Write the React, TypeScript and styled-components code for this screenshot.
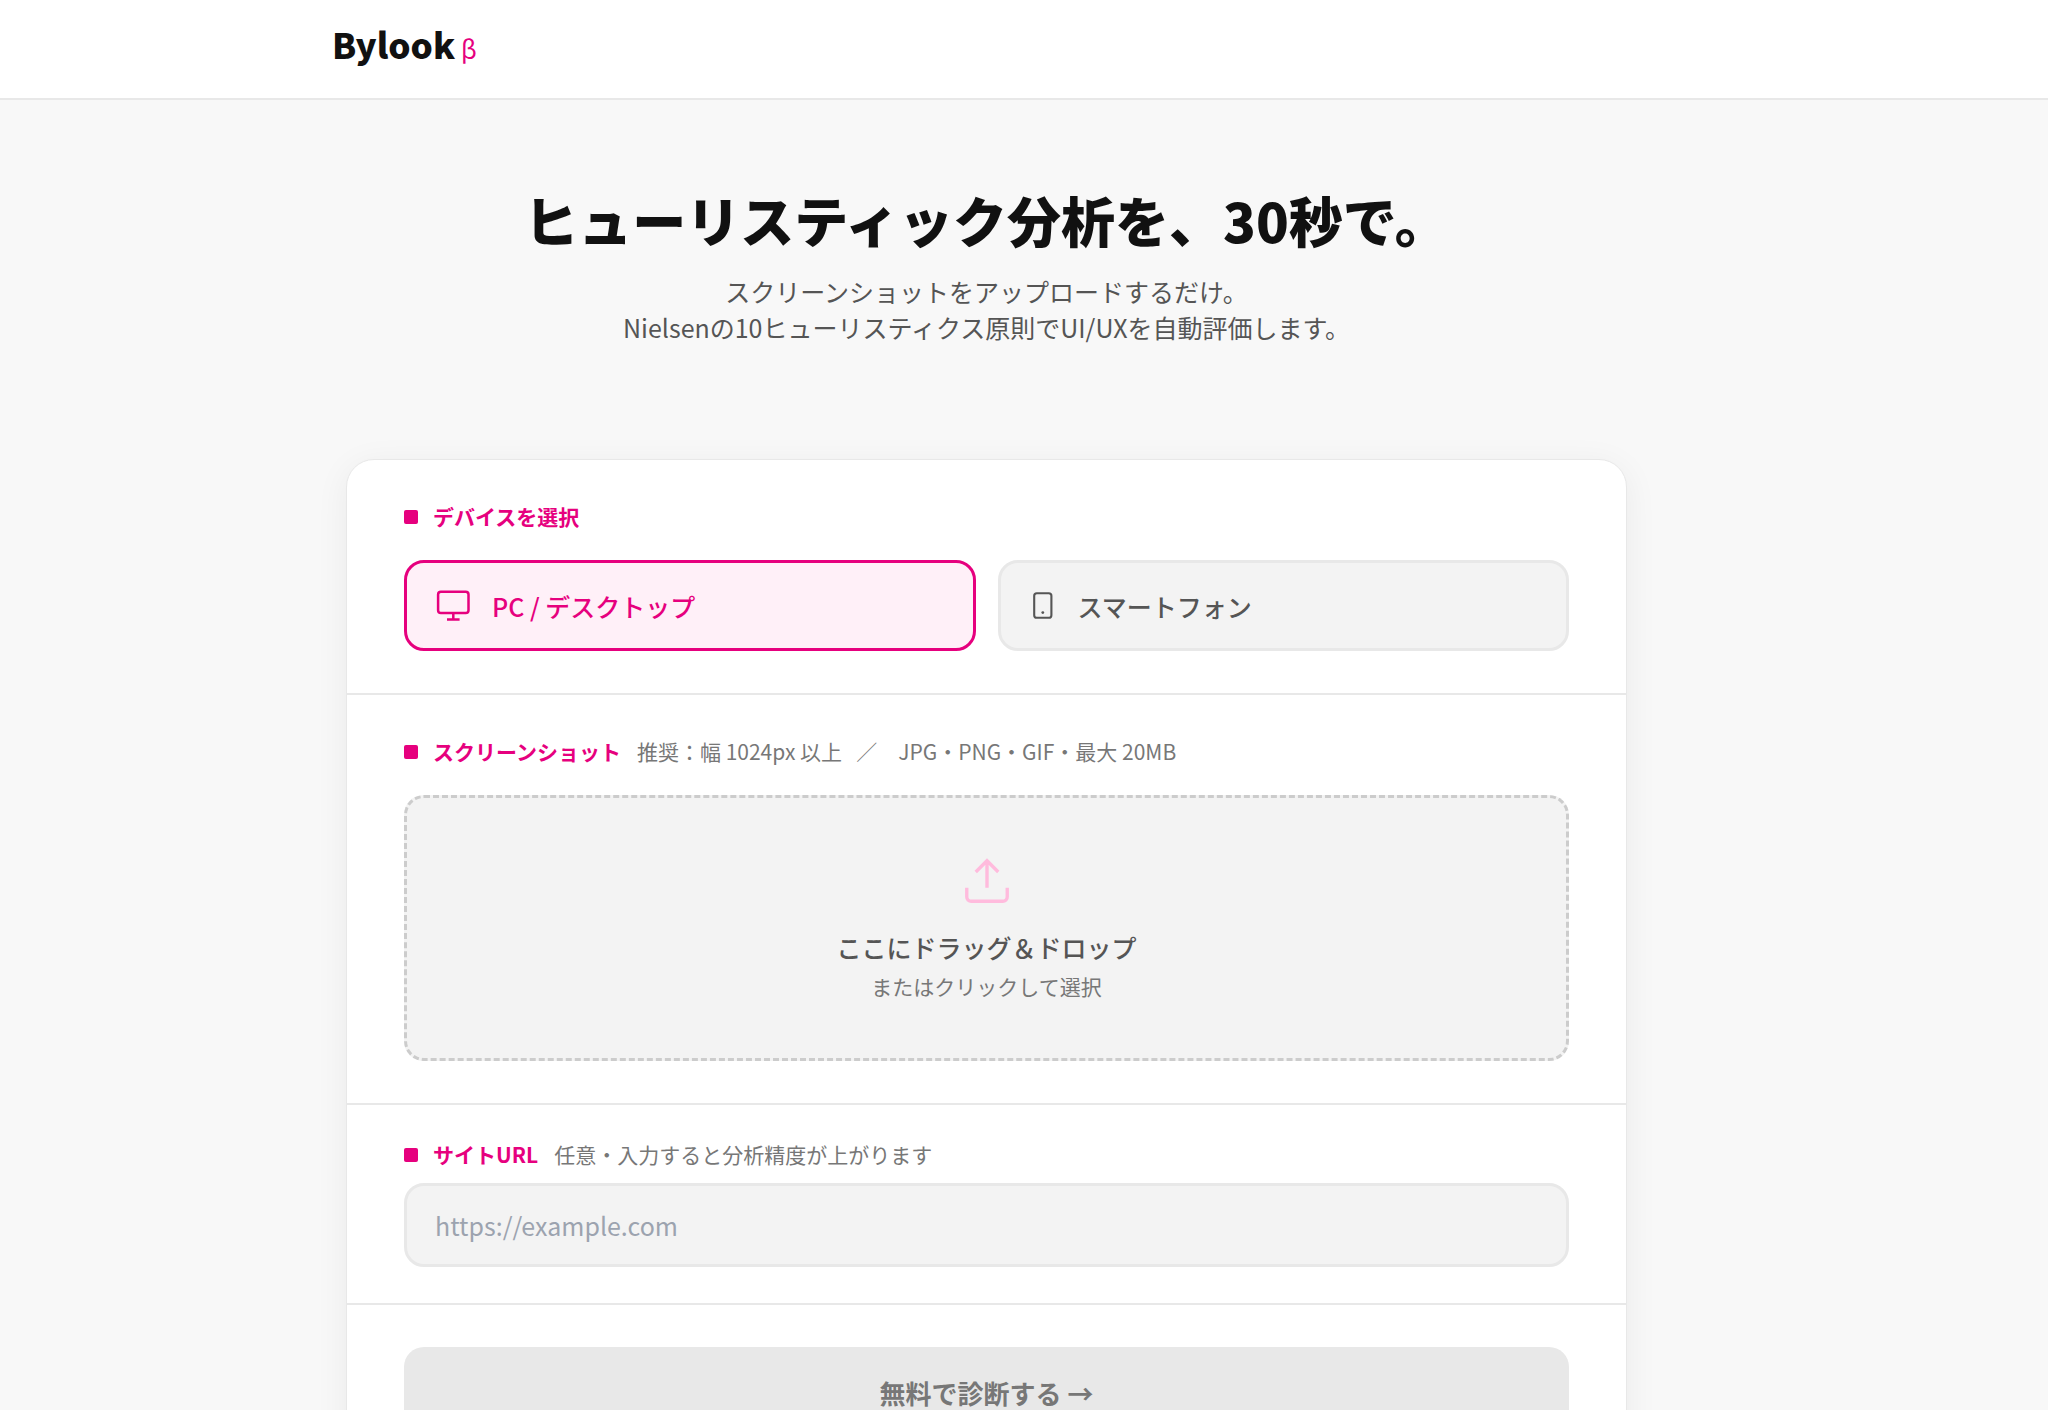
import React, { useState } from "react";
import styled, { createGlobalStyle, css } from "styled-components";

const color = {
  brand: "#e6007e",
  brandSoft: "#fff0f8",
  brandPale: "#ffbbdd",
  ink: "#111111",
  text: "#555555",
  muted: "#777777",
  placeholder: "#9ca3af",
  line: "#e8e8e8",
  dash: "#cccccc",
  field: "#f3f3f3",
  page: "#f8f8f8",
  surface: "#ffffff",
};

const fontStack = '"Noto Sans CJK JP", "Noto Sans", sans-serif';

const GlobalStyle = createGlobalStyle`
  *, *::before, *::after { box-sizing: border-box; }
  body {
    margin: 0;
    background: ${color.page};
    color: ${color.text};
    font-family: ${fontStack};
    font-size: 25px;
  }
  button, input { font: inherit; }
`;

const Header = styled.header`
  padding-right: 75px;
  background: ${color.surface};
  border-bottom: 2px solid ${color.line};
`;

const HeaderInner = styled.div`
  display: flex;
  align-items: center;
  max-width: 1309px;
  margin: 0 auto;
  padding: 18px 0 28px;
`;

const Logo = styled.a`
  display: flex;
  align-items: baseline;
  gap: 6px;
  color: ${color.ink};
  font-size: 35px;
  font-weight: 900;
  line-height: 52px;
  text-decoration: none;
`;

const Beta = styled.span`
  color: ${color.brand};
  font-size: 25px;
  font-weight: 400;
  line-height: 36px;
`;

const Main = styled.main`
  padding: 85px 75px 112px 0;
`;

const Hero = styled.section`
  margin-bottom: 114px;
  text-align: center;
`;

const Title = styled.h1`
  margin: 0 0 18px;
  color: ${color.ink};
  font-size: 54px;
  font-weight: 900;
  line-height: 70px;
`;

const Lead = styled.p`
  margin: 0;
  line-height: 36px;
`;

const Card = styled.form`
  max-width: 1281px;
  margin: 0 auto;
  background: ${color.surface};
  border: 1px solid ${color.line};
  border-radius: 28px;
  box-shadow: 0 6px 34px rgba(0, 0, 0, 0.06);
`;

const Section = styled.section<{ $compact?: boolean }>`
  padding: ${(p) => (p.$compact ? "35px 57px 36px" : "42px 57px")};

  & + & {
    border-top: 2px solid ${color.line};
  }
`;

const SectionHead = styled.div<{ $compact?: boolean }>`
  display: flex;
  align-items: center;
  margin-bottom: ${(p) => (p.$compact ? "14px" : "29px")};
  font-size: 21px;
  line-height: 29px;

  &::before {
    content: "";
    width: 14px;
    height: 14px;
    margin-right: 15px;
    border-radius: 2px;
    background: ${color.brand};
  }
`;

const headText = css`
  margin: 0;
  color: ${color.brand};
  font-size: 21px;
  font-weight: 700;
`;

const SectionTitle = styled.h2`
  ${headText}
`;

const FieldLabel = styled.label`
  ${headText}
`;

const Hint = styled.span`
  margin-left: 16px;
  color: ${color.muted};
`;

const DeviceGrid = styled.div`
  display: grid;
  grid-template-columns: 1fr 1fr;
  gap: 22px;
`;

const DeviceButton = styled.button<{ $active: boolean }>`
  display: flex;
  align-items: center;
  gap: 20px;
  height: 91px;
  padding: 0 28px;
  border: 3px solid ${(p) => (p.$active ? color.brand : color.line)};
  border-radius: 20px;
  background: ${(p) => (p.$active ? color.brandSoft : color.field)};
  color: ${(p) => (p.$active ? color.brand : color.text)};
  font-weight: 500;
  cursor: pointer;
`;

const DropZone = styled.label`
  display: flex;
  flex-direction: column;
  align-items: center;
  padding: 56px 24px;
  border: 3px dashed ${color.dash};
  border-radius: 20px;
  background: ${color.field};
  cursor: pointer;
`;

const FileInput = styled.input`
  position: absolute;
  width: 1px;
  height: 1px;
  opacity: 0;
`;

const DropTitle = styled.span`
  margin: 21px 0 6px;
  font-weight: 500;
  line-height: 36px;
`;

const DropHint = styled.span`
  color: ${color.muted};
  font-size: 21px;
  line-height: 31px;
`;

const UrlInput = styled.input`
  display: block;
  width: 100%;
  height: 84px;
  padding: 0 28px;
  border: 3px solid ${color.line};
  border-radius: 20px;
  background: ${color.field};
  color: ${color.ink};

  &::placeholder {
    color: ${color.placeholder};
    opacity: 1;
  }
`;

const SubmitButton = styled.button`
  display: block;
  width: 100%;
  height: 91px;
  padding: 0;
  border: 0;
  border-radius: 20px;
  background: ${color.line};
  color: ${color.muted};
  font-size: 26px;
  font-weight: 700;
  line-height: 30px;
`;

function MonitorIcon() {
  return (
    <svg width="37" height="37" viewBox="0 0 37 37" fill="none" stroke="currentColor" strokeWidth="2.5" aria-hidden="true">
      <rect x="3.1" y="4.8" width="30.4" height="21.2" rx="2.8" />
      <path d="M18.3 26v6.2M12 32.4h12.6" />
    </svg>
  );
}

function PhoneIcon() {
  return (
    <svg width="29" height="37" viewBox="0 0 29 37" fill="none" stroke="currentColor" strokeWidth="2.1" aria-hidden="true">
      <rect x="5.2" y="6.2" width="17.2" height="24.6" rx="2.6" />
      <circle cx="13.8" cy="25.6" r="1.4" fill="currentColor" stroke="none" />
    </svg>
  );
}

function UploadIcon() {
  return (
    <svg width="54" height="54" viewBox="0 0 24 24" fill="none" stroke={color.brandPale} strokeWidth="1.5" aria-hidden="true">
      <path d="M21 15v4a2 2 0 0 1-2 2H5a2 2 0 0 1-2-2v-4" />
      <path d="M17 8l-5-5-5 5M12 3v12" />
    </svg>
  );
}

const devices = [
  { id: "pc", label: "PC / デスクトップ", Icon: MonitorIcon },
  { id: "phone", label: "スマートフォン", Icon: PhoneIcon },
];

export default function App() {
  const [device, setDevice] = useState("pc");
  const [url, setUrl] = useState("");

  return (
    <>
      <GlobalStyle />
      <Header>
        <HeaderInner>
          <Logo href="#">
            Bylook<Beta>β</Beta>
          </Logo>
        </HeaderInner>
      </Header>
      <Main>
        <Hero>
          <Title>ヒューリスティック分析を、30秒で。</Title>
          <Lead>
            スクリーンショットをアップロードするだけ。
            <br />
            Nielsenの10ヒューリスティクス原則でUI/UXを自動評価します。
          </Lead>
        </Hero>
        <Card onSubmit={(e) => e.preventDefault()}>
          <Section>
            <SectionHead>
              <SectionTitle>デバイスを選択</SectionTitle>
            </SectionHead>
            <DeviceGrid>
              {devices.map(({ id, label, Icon }) => (
                <DeviceButton
                  key={id}
                  type="button"
                  $active={device === id}
                  aria-pressed={device === id}
                  onClick={() => setDevice(id)}
                >
                  <Icon />
                  {label}
                </DeviceButton>
              ))}
            </DeviceGrid>
          </Section>
          <Section>
            <SectionHead>
              <SectionTitle>スクリーンショット</SectionTitle>
              <Hint>推奨：幅 1024px 以上&nbsp;&nbsp; ／　JPG・PNG・GIF・最大 20MB</Hint>
            </SectionHead>
            <DropZone htmlFor="screenshot">
              <FileInput id="screenshot" type="file" accept="image/*" />
              <UploadIcon />
              <DropTitle>ここにドラッグ＆ドロップ</DropTitle>
              <DropHint>またはクリックして選択</DropHint>
            </DropZone>
          </Section>
          <Section $compact>
            <SectionHead $compact>
              <FieldLabel htmlFor="site-url">サイトURL</FieldLabel>
              <Hint>任意・入力すると分析精度が上がります</Hint>
            </SectionHead>
            <UrlInput
              id="site-url"
              type="url"
              placeholder="https://example.com"
              value={url}
              onChange={(e) => setUrl(e.target.value)}
            />
          </Section>
          <Section>
            <SubmitButton type="submit" disabled>
              無料で診断する →
            </SubmitButton>
          </Section>
        </Card>
      </Main>
    </>
  );
}
